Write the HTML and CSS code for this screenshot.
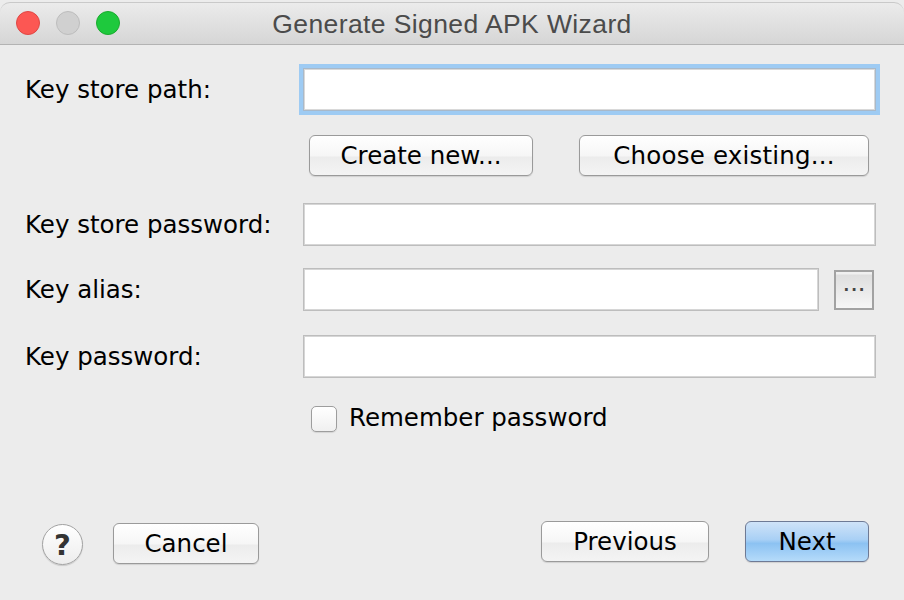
FILE: index.html
```html
<!DOCTYPE html>
<html>
<head>
<meta charset="utf-8">
<title>Generate Signed APK Wizard</title>
<link rel="stylesheet" href="styles.css">
</head>
<body>
<div class="window">
  <div class="titlebar">
    <div class="lights">
      <span class="light red"></span>
      <span class="light gray"></span>
      <span class="light green"></span>
    </div>
    <div class="title">Generate Signed APK Wizard</div>
  </div>
  <div class="content">
    <div class="row row-path">
      <label class="label">Key store path:</label>
      <div class="field focused"></div>
    </div>
    <div class="row-buttons">
      <button class="btn btn-create">Create new...</button>
      <button class="btn btn-choose">Choose existing...</button>
    </div>
    <div class="row row-storepw">
      <label class="label">Key store password:</label>
      <div class="field"></div>
    </div>
    <div class="row row-alias">
      <label class="label">Key alias:</label>
      <div class="field-group">
        <div class="field field-alias"></div>
        <button class="btn-more"><span class="dots">...</span></button>
      </div>
    </div>
    <div class="row row-keypw">
      <label class="label">Key password:</label>
      <div class="field"></div>
    </div>
    <div class="row-check">
      <span class="checkbox"></span>
      <span class="check-label">Remember password</span>
    </div>
  </div>
  <div class="footer">
    <button class="help">?</button>
    <button class="btn btn-cancel">Cancel</button>
    <div class="spacer"></div>
    <button class="btn btn-prev">Previous</button>
    <button class="btn btn-next">Next</button>
  </div>
</div>
</body>
</html>
```
FILE: styles.css
```css
* { box-sizing: border-box; }
html, body {
  margin: 0;
  padding: 0;
  background: #ececec;
}
body {
  font-family: "DejaVu Sans", sans-serif;
  font-size: 24.5px;
  color: #000;
}
.window {
  width: 904px;
  height: 600px;
  background: #ececec;
  position: relative;
  overflow: hidden;
}
.titlebar {
  margin-top: 2px;
  height: 43px;
  border-top: 1px solid #c9c9c9;
  border-bottom: 1px solid #b3b3b3;
  border-radius: 10px 10px 0 0;
  background: linear-gradient(#ebebeb, #d6d6d6);
  display: flex;
  align-items: center;
  position: relative;
}
.lights {
  display: flex;
  gap: 16px;
  padding-left: 16px;
  position: absolute;
  left: 0;
  top: 8px;
}
.light {
  width: 24px;
  height: 24px;
  border-radius: 50%;
  display: block;
}
.red { background: #fc5753; border: 1px solid #df4744; }
.gray { background: #d0d0d0; border: 1px solid #bdbdbd; }
.green { background: #1ec93d; border: 1px solid #1aab2e; }
.title {
  flex: 1;
  text-align: center;
  font-family: "Liberation Sans", Arial, sans-serif;
  font-size: 26.5px;
  letter-spacing: 0.4px;
  color: #4b4b4b;
  padding-top: 1px;
}
.content {
  padding-left: 25px;
  padding-right: 28px;
}
.row {
  display: flex;
  align-items: center;
}
.label {
  width: 278px;
  flex: none;
  white-space: nowrap;
}
.field {
  width: 573px;
  height: 43px;
  background: #fff;
  border: 1px solid #bdbdbd;
  box-shadow: inset 0 0 0 1px #d6d6d6;
}
.field.focused {
  box-shadow: inset 0 0 0 1px #d9d9d9, 0 0 0 4px #9ecbf3;
  border-color: #a9b9c9;
}
.row-path { margin-top: 23px; }
.row-buttons {
  margin-top: 24px;
  padding-left: 284px;
  display: flex;
  gap: 46px;
}
.btn {
  font-family: "DejaVu Sans", sans-serif;
  font-size: 24.5px;
  color: #000;
  height: 41px;
  padding: 0;
  border: 1px solid #9a9a9a;
  border-radius: 6px;
  background: linear-gradient(#ffffff, #f6f6f6 50%, #ececec 55%, #f4f4f4);
  box-shadow: 0 1px 1px rgba(0,0,0,0.12);
  line-height: 38px;
}
.btn-create { width: 224px; }
.btn-choose { width: 290px; letter-spacing: 0.2px; }
.row-storepw { margin-top: 27px; }
.row-alias { margin-top: 22px; }
.row-keypw { margin-top: 24px; }
.field-group {
  display: flex;
  align-items: center;
  gap: 15px;
}
.field-alias { width: 516px; }
.btn-more {
  width: 40px;
  height: 40px;
  padding: 0;
  border: 2px solid #a2a2a2;
  background: linear-gradient(#f0f0f0 0, #f0f0f0 2px, #dedede 3px, #f6f6f6);
  display: flex;
  align-items: center;
  justify-content: center;
  font-family: "DejaVu Sans", sans-serif;
  font-size: 15px;
  font-weight: bold;
  color: #444;
  letter-spacing: 2px;
}
.dots { line-height: 1; margin-top: -6px; margin-left: 2px; }
.row-check {
  margin-top: 28px;
  padding-left: 286px;
  display: flex;
  align-items: center;
  gap: 12px;
}
.check-label { margin-top: -3px; }
.checkbox {
  width: 26px;
  height: 26px;
  border: 1px solid #9d9d9d;
  border-radius: 5px;
  background: linear-gradient(#ffffff, #f0f0f0);
  box-shadow: 0 1px 1px rgba(0,0,0,0.1);
  display: block;
}
.footer {
  position: absolute;
  left: 0;
  right: 0;
  top: 521px;
  display: flex;
  align-items: flex-start;
  padding-left: 42px;
  padding-right: 35px;
}
.help {
  width: 41px;
  height: 41px;
  margin-top: 3px;
  border-radius: 50%;
  border: 1px solid #a2a2a2;
  background: linear-gradient(#ffffff, #ededed);
  box-shadow: 0 1px 1px rgba(0,0,0,0.15);
  font-family: "DejaVu Sans", sans-serif;
  font-weight: bold;
  font-size: 29px;
  color: #333;
  padding: 0;
  line-height: 38px;
}
.btn-cancel { width: 146px; margin-left: 30px; margin-top: 2px; }
.spacer { flex: 1; }
.btn-prev { width: 168px; }
.btn-next {
  width: 124px;
  margin-left: 36px;
  border-color: #6e7a95;
  background: linear-gradient(#cfe3f8, #a9d0f5 45%, #8cc2f2 55%, #b5dbfa);
}
```
